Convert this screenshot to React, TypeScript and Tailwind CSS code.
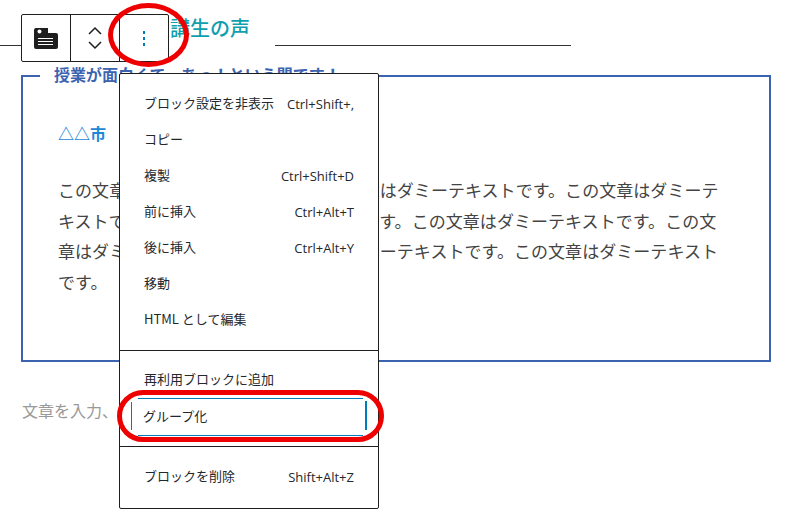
// Block editor screenshot: heading, bordered box, toolbar and options menu
const FONT = "font-['Noto_Sans_CJK_JP','Noto_Sans',sans-serif]";

const DUMMY = "この文章はダミーテキストです。".repeat(8);

function MenuItem({ label, keys }: { label: string; keys?: string }) {
  return (
    <div className="flex h-9 items-center justify-between pl-6 pr-6 text-[13px] text-[#23282d]">
      <span>{label}</span>
      {keys && <span className="pt-[3px] font-['Open_Sans',sans-serif] text-[13px]">{keys}</span>}
    </div>
  );
}

function BlockIcon() {
  return (
    <svg width="24" height="21" viewBox="0 0 24 21">
      <path d="M0 2a2 2 0 0 1 2-2h12v5h8a2 2 0 0 1 2 2v12a2 2 0 0 1-2 2H2a2 2 0 0 1-2-2z" fill="#1e1e1e" />
      <circle cx="5.5" cy="3.5" r="2" fill="#fff" />
      <path d="M4 10.5h15M4 13.5h15M4 16.5h15" stroke="#fff" strokeWidth="1.2" />
    </svg>
  );
}

export default function App() {
  return (
    <div className={`relative h-[509px] w-[795px] overflow-hidden bg-white ${FONT}`}>
      {/* heading with rule */}
      <div className="flex h-[75px] items-start">
        <div className="mt-[45px] h-px w-[150px] bg-[#333]" />
        <div className="mt-[13px] w-[125px] text-[20px] font-medium leading-[30px] text-[#0f9fae]">受講生の声</div>
        <div className="mt-[45px] h-px w-[296px] bg-[#333]" />
      </div>

      {/* bordered box */}
      <div className="relative ml-[21px] h-[287px] w-[750px] border-2 border-[#3c63b0] pl-[35px] pr-[48px] pt-[44px]">
        <div className="absolute left-[17px] top-[-15px] bg-white px-[14px] text-[16px] font-bold leading-[24px] whitespace-nowrap text-[#3c63b0]">
          授業が面白くて、あっ！という間です！
        </div>
        <div className="text-[16px] font-bold leading-[24px] text-[#1e88d8]">△△市</div>
        <p className="mt-[30px] text-[17px] leading-[30.6px] tracking-[0.05px] text-[#444]">{DUMMY}</p>
      </div>

      <div className="ml-[22px] mt-[36px] text-[16px] leading-[24px] text-[#999]">文章を入力、または / でブロックを選択</div>

      {/* block toolbar */}
      <div className="absolute left-[21px] top-[14px] flex h-[48px] rounded-[2px] border border-[#1e1e1e] bg-white">
        <div className="flex w-[49px] items-center justify-center border-r border-[#1e1e1e]">
          <BlockIcon />
        </div>
        <div className="flex w-[49px] flex-col items-center justify-center gap-[4px] border-r border-[#1e1e1e]">
          <svg width="16" height="10" viewBox="0 0 16 10" fill="none" stroke="#1e1e1e" strokeWidth="1.5">
            <path d="M2 8l6-6 6 6" />
          </svg>
          <svg width="16" height="10" viewBox="0 0 16 10" fill="none" stroke="#1e1e1e" strokeWidth="1.5">
            <path d="M2 2l6 6 6-6" />
          </svg>
        </div>
        <div className="flex w-[48px] flex-col items-center justify-center gap-[3px]">
          <span className="h-[3px] w-[2px] bg-[#007cba]" />
          <span className="h-[3px] w-[2px] bg-[#007cba]" />
          <span className="h-[3px] w-[2px] bg-[#007cba]" />
        </div>
      </div>

      {/* options menu */}
      <div className="absolute left-[119px] top-[73px] w-[260px] rounded-[2px] border border-[#1e1e1e] bg-white">
        <div className="pb-[13px] pt-[11px]">
          <MenuItem label="ブロック設定を非表示" keys="Ctrl+Shift+," />
          <MenuItem label="コピー" />
          <MenuItem label="複製" keys="Ctrl+Shift+D" />
          <MenuItem label="前に挿入" keys="Ctrl+Alt+T" />
          <MenuItem label="後に挿入" keys="Ctrl+Alt+Y" />
          <MenuItem label="移動" />
          <MenuItem label="HTML として編集" />
        </div>
        <div className="border-t border-[#1e1e1e] pb-[10px] pt-[11px]">
          <div className="-mt-px">
            <MenuItem label="再利用ブロックに追加" />
          </div>
          {/* focus ring, corners don't join in the reference */}
          <div className="relative mx-[11px] mt-px flex h-[38px] items-center pb-[2px] pl-[12px] text-[13px] text-[#23282d]">
            グループ化
            <span className="absolute left-[7px] right-[4px] top-0 h-px bg-[#007cba]" />
            <span className="absolute bottom-0 left-[7px] right-[4px] h-px bg-[#007cba]" />
            <span className="absolute bottom-[6px] left-0 top-[4px] w-px bg-[#007cba]" />
            <span className="absolute bottom-[6px] right-0 top-[3px] w-[2px] bg-[#007cba]" />
          </div>
        </div>
        <div className="border-t border-[#1e1e1e] pb-[14px] pt-[11px]">
          <MenuItem label="ブロックを削除" keys="Shift+Alt+Z" />
        </div>
      </div>

      {/* red annotations */}
      <div className="absolute left-[108px] top-[3px] h-[64px] w-[81px] rounded-[50%] border-[5px] border-[#ee0000]" />
      <div className="absolute left-[117px] top-[390px] h-[52px] w-[267px] rounded-[26px] border-[5px] border-[#ee0000]" />
    </div>
  );
}
